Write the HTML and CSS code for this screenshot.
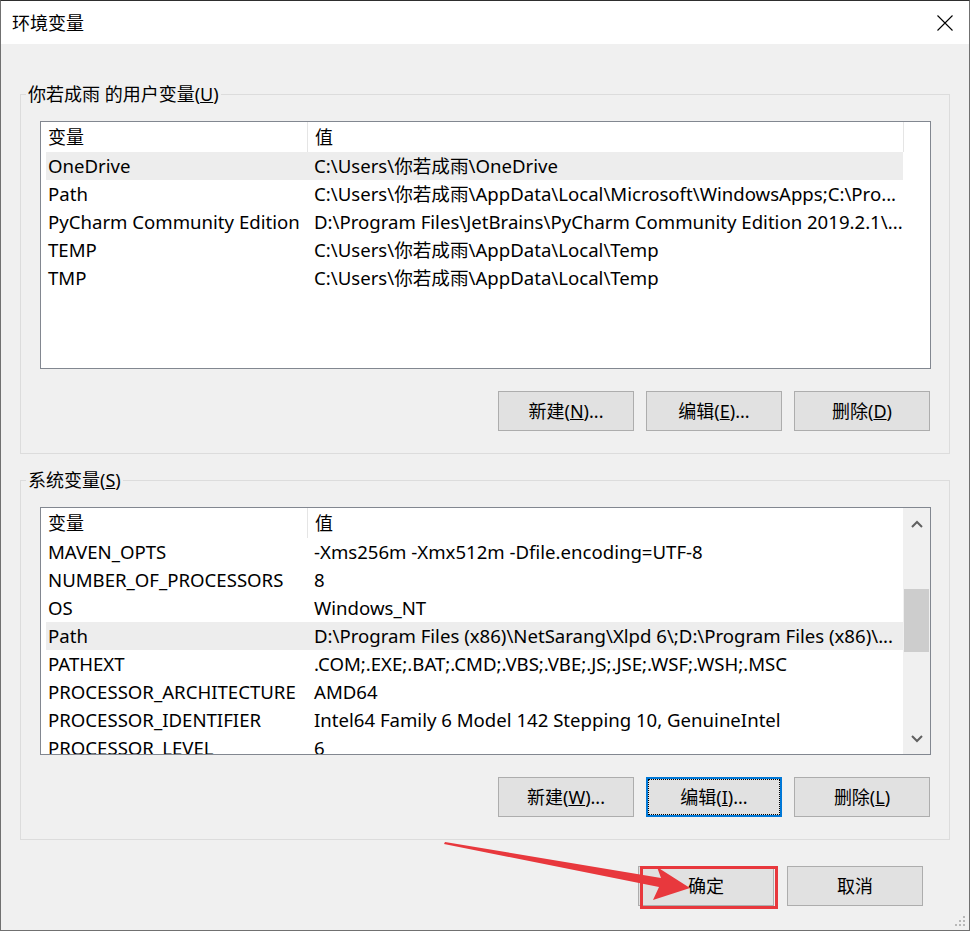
FILE: index.html
```html
<!DOCTYPE html>
<html lang="zh-CN">
<head>
<meta charset="utf-8">
<title>环境变量</title>
<link rel="stylesheet" href="styles.css">
</head>
<body>
<div class="window">
  <div class="titlebar">
    <span class="title">环境变量</span>
    <svg class="close" width="16" height="16" viewBox="0 0 16 16"><path d="M0.5 0.5L15.5 15.5M15.5 0.5L0.5 15.5" stroke="#000" stroke-width="1.1" fill="none"/></svg>
  </div>
  <div class="content">
    <fieldset class="group">
      <legend>你若成雨 的用户变量(<u>U</u>)</legend>
      <div class="groupbody">
        <div class="list">
          <div class="rows">
            <div class="hrow"><span class="hc1">变量</span><span class="hc2">值</span></div>
            <div class="row sel"><span class="c1">OneDrive</span><span class="c2">C:\Users\你若成雨\OneDrive</span></div>
            <div class="row"><span class="c1">Path</span><span class="c2">C:\Users\你若成雨\AppData\Local\Microsoft\WindowsApps;C:\Pro...</span></div>
            <div class="row"><span class="c1">PyCharm Community Edition</span><span class="c2">D:\Program Files\JetBrains\PyCharm Community Edition 2019.2.1\...</span></div>
            <div class="row"><span class="c1">TEMP</span><span class="c2">C:\Users\你若成雨\AppData\Local\Temp</span></div>
            <div class="row"><span class="c1">TMP</span><span class="c2">C:\Users\你若成雨\AppData\Local\Temp</span></div>
          </div>
        </div>
        <div class="btnrow">
          <div class="btn">新建(<u>N</u>)...</div>
          <div class="btn">编辑(<u>E</u>)...</div>
          <div class="btn">删除(<u>D</u>)</div>
        </div>
      </div>
    </fieldset>

    <fieldset class="group second">
      <legend>系统变量(<u>S</u>)</legend>
      <div class="groupbody">
        <div class="list">
          <div class="rows">
            <div class="hrow"><span class="hc1">变量</span><span class="hc2">值</span></div>
            <div class="row"><span class="c1">MAVEN_OPTS</span><span class="c2">-Xms256m -Xmx512m -Dfile.encoding=UTF-8</span></div>
            <div class="row"><span class="c1">NUMBER_OF_PROCESSORS</span><span class="c2">8</span></div>
            <div class="row"><span class="c1">OS</span><span class="c2">Windows_NT</span></div>
            <div class="row sel"><span class="c1">Path</span><span class="c2">D:\Program Files (x86)\NetSarang\Xlpd 6\;D:\Program Files (x86)\...</span></div>
            <div class="row"><span class="c1">PATHEXT</span><span class="c2">.COM;.EXE;.BAT;.CMD;.VBS;.VBE;.JS;.JSE;.WSF;.WSH;.MSC</span></div>
            <div class="row"><span class="c1">PROCESSOR_ARCHITECTURE</span><span class="c2">AMD64</span></div>
            <div class="row"><span class="c1">PROCESSOR_IDENTIFIER</span><span class="c2">Intel64 Family 6 Model 142 Stepping 10, GenuineIntel</span></div>
            <div class="row"><span class="c1">PROCESSOR_LEVEL</span><span class="c2">6</span></div>
          </div>
          <div class="scrollbar">
            <div class="sarrow">
              <svg width="12" height="8" viewBox="0 0 12 8"><polyline points="1,7 6,2 11,7" fill="none" stroke="#606060" stroke-width="2"/></svg>
            </div>
            <div class="track"><div class="thumb"></div></div>
            <div class="sarrow">
              <svg width="12" height="8" viewBox="0 0 12 8"><polyline points="1,1 6,6 11,1" fill="none" stroke="#606060" stroke-width="2"/></svg>
            </div>
          </div>
        </div>
        <div class="btnrow">
          <div class="btn">新建(<u>W</u>)...</div>
          <div class="btn focus"><span class="focusrect">编辑(<u>I</u>)...</span></div>
          <div class="btn">删除(<u>L</u>)</div>
        </div>
      </div>
    </fieldset>

    <div class="footer">
      <div class="btn">确定</div>
      <div class="btn">取消</div>
    </div>
  </div>

  <div class="redbox"></div>
  <svg class="arrow" width="970" height="931" viewBox="0 0 970 931">
    <polygon points="445,842 661,878 657,867 690,888 653,900 659,887 444,844" fill="#e8383d"/>
  </svg>
  <svg class="grip" width="12" height="12" viewBox="0 0 12 12">
    <rect x="9" y="1" width="2" height="2" fill="#b8b8b8"/>
    <rect x="5" y="5" width="2" height="2" fill="#b8b8b8"/>
    <rect x="9" y="5" width="2" height="2" fill="#b8b8b8"/>
    <rect x="1" y="9" width="2" height="2" fill="#b8b8b8"/>
    <rect x="5" y="9" width="2" height="2" fill="#b8b8b8"/>
    <rect x="9" y="9" width="2" height="2" fill="#b8b8b8"/>
  </svg>
</div>
</body>
</html>
```

FILE: styles.css
```css
html, body {
  margin: 0;
  padding: 0;
  background: #f0f0f0;
}
body {
  font-family: "Noto Sans", "Noto Sans CJK SC", sans-serif;
  font-size: 18px;
  color: #000;
}
.window {
  position: relative;
  width: 970px;
  height: 931px;
  box-sizing: border-box;
  border: 1px solid #707070;
  border-top: 1px solid #2e2e2e;
  background: #f0f0f0;
  display: flex;
  flex-direction: column;
  overflow: hidden;
}
.titlebar {
  height: 43px;
  flex: none;
  background: #fff;
  display: flex;
  align-items: center;
  justify-content: space-between;
  padding: 0 16px 0 11px;
}
.title {
  font-size: 18px;
  line-height: 22px;
  margin-top: 1px;
}
.close {
  display: block;
}
.content {
  padding: 0 19px;
  display: flex;
  flex-direction: column;
}
.group {
  margin: 39px 0 0;
  padding: 0;
  border: 1px solid #dcdcdc;
  min-width: 0;
}
.group.second {
  margin-top: 15px;
}
.group legend {
  margin-left: 5px;
  padding: 0 2px;
  font-size: 18px;
  line-height: 22px;
}
.groupbody {
  padding: 16px 18px 22px 19px;
}
.list {
  height: 248px;
  box-sizing: border-box;
  border: 1px solid #828790;
  background: #fff;
  overflow: hidden;
  display: flex;
}
.rows {
  width: 862px;
  flex: none;
}
.hrow {
  height: 30px;
  display: flex;
  align-items: center;
}
.hc1 {
  width: 259px;
  height: 30px;
  line-height: 30px;
  padding-left: 7px;
  border-right: 1px solid #e5e5e5;
  flex: none;
}
.hc2 {
  width: 588px;
  height: 30px;
  line-height: 30px;
  padding-left: 7px;
  border-right: 1px solid #e5e5e5;
  flex: none;
}
.row {
  height: 28px;
  line-height: 28px;
  margin-left: 5px;
  display: flex;
  white-space: nowrap;
  font-size: 18.6px;
}
.row.sel {
  background: #ededed;
}
.c1 {
  width: 259px;
  padding-left: 2px;
  flex: none;
  overflow: hidden;
}
.c2 {
  width: 585px;
  padding-left: 7px;
  padding-right: 4px;
  flex: none;
  overflow: hidden;
}
.scrollbar {
  flex: 1;
  background: #f0f0f0;
  display: flex;
  flex-direction: column;
}
.sarrow {
  height: 31px;
  display: flex;
  align-items: center;
  justify-content: center;
  flex: none;
}
.sarrow svg {
  display: block;
  margin-left: 1px;
}
.track {
  flex: 1;
  padding: 50px 1px 0 1px;
}
.thumb {
  height: 63px;
  background: #cdcdcd;
}
.btnrow {
  margin-top: 22px;
  display: flex;
  justify-content: flex-end;
  gap: 12px;
  padding-right: 1px;
}
.btn {
  width: 136px;
  height: 40px;
  box-sizing: border-box;
  border: 1px solid #adadad;
  background: #e1e1e1;
  display: flex;
  align-items: center;
  justify-content: center;
  font-size: 18px;
  line-height: 22px;
  white-space: nowrap;
}
.btn.focus {
  border: 2px solid #0078d7;
  padding: 0;
  align-items: stretch;
  justify-content: stretch;
}
.focusrect {
  flex: 1;
  border: 1px dotted #000;
  display: flex;
  align-items: center;
  justify-content: center;
}
.footer {
  margin-top: 26px;
  display: flex;
  justify-content: flex-end;
  gap: 13px;
  padding-right: 27px;
}
.redbox {
  position: absolute;
  left: 639px;
  top: 865px;
  width: 138px;
  height: 43px;
  box-sizing: border-box;
  border: 3px solid #e8383d;
}
.arrow {
  position: absolute;
  left: -1px;
  top: -1px;
  pointer-events: none;
}
.grip {
  position: absolute;
  right: 3px;
  bottom: 3px;
}
```
